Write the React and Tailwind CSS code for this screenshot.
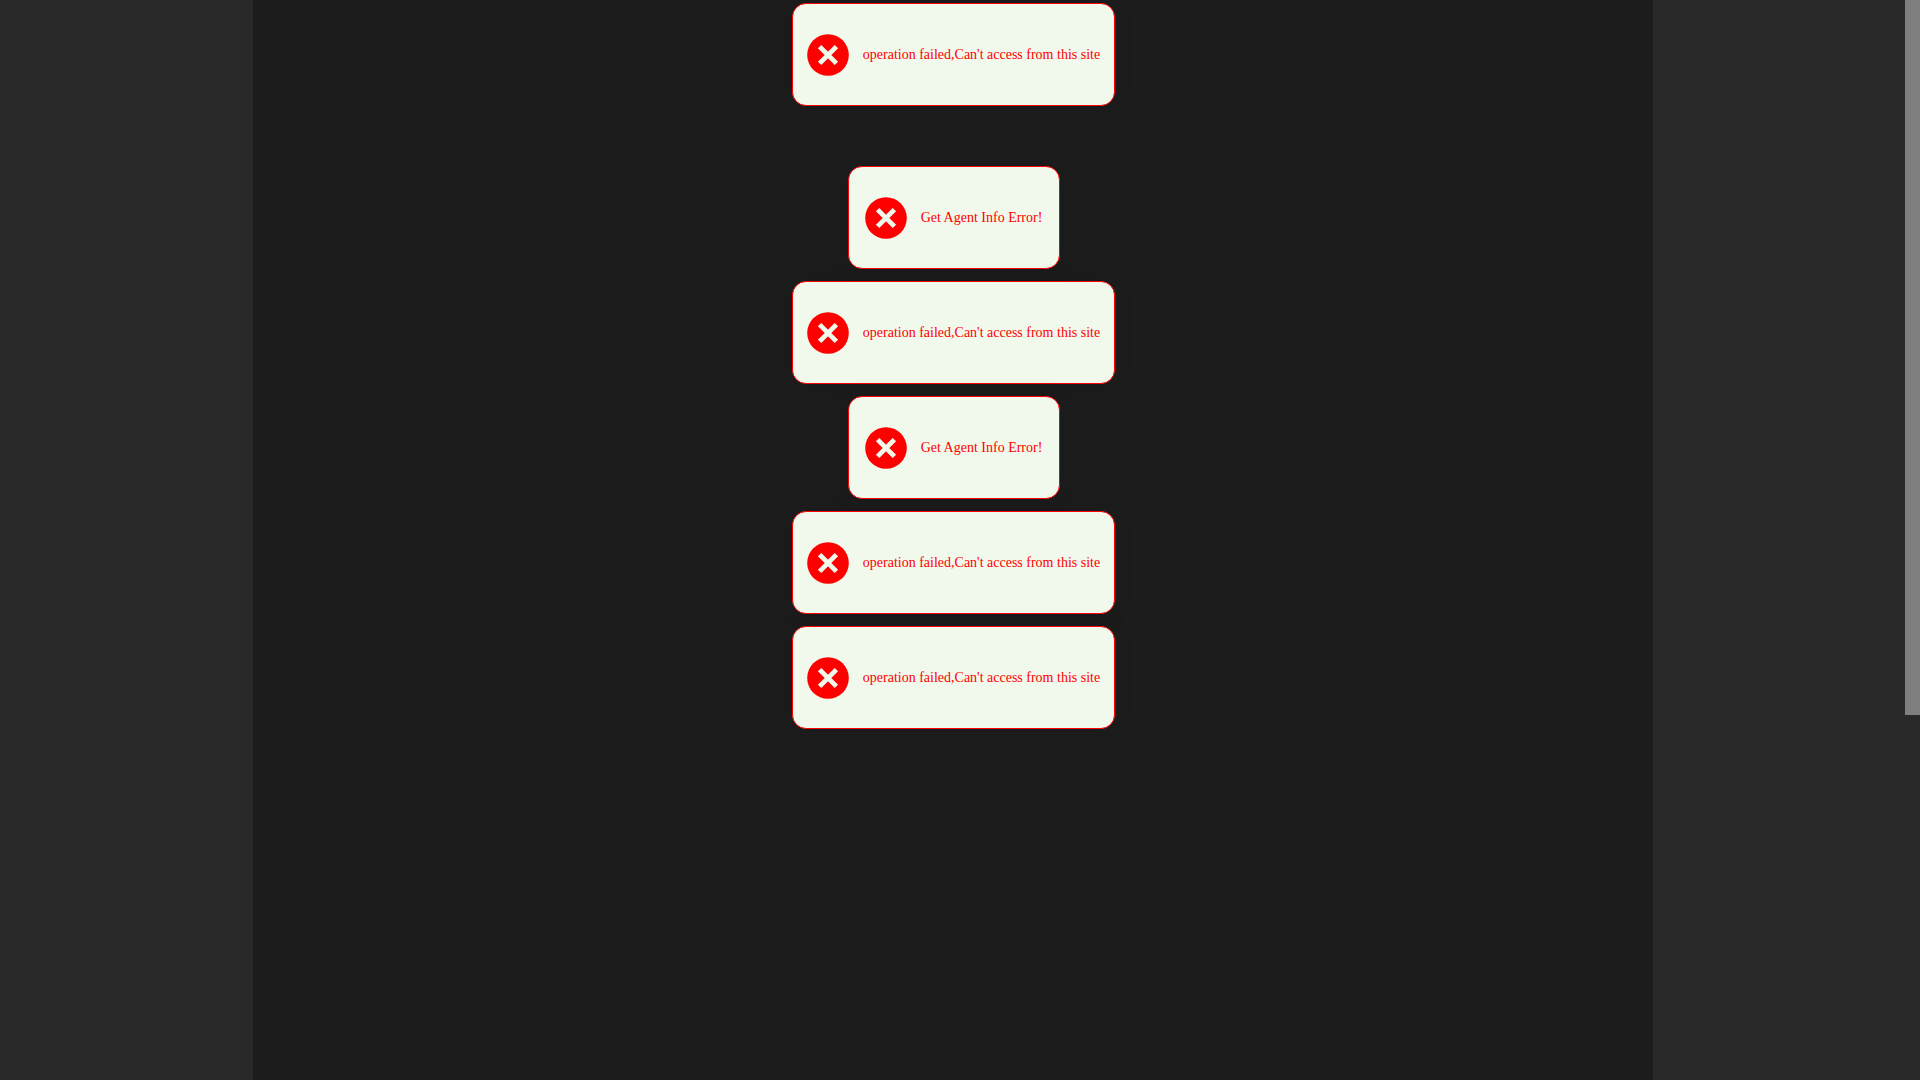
const ACCESS = "operation failed,Can't access from this site";
const AGENT = "Get Agent Info Error!";

function ErrorIcon() {
  return (
    <svg viewBox="0 0 42 42" className="size-[42px] shrink-0" aria-hidden="true">
      <circle cx="21" cy="21" r="20.8" fill="#ff0000" />
      <path d="M12.6 12.6 29.4 29.4M29.4 12.6 12.6 29.4" stroke="#f1f8ec" strokeWidth="4.8" />
    </svg>
  );
}

function Toast({ message }) {
  return (
    <div
      role="alert"
      className="flex h-[103px] min-w-[212px] items-center justify-center gap-3.5 rounded-[14px] border border-[#ff0000] bg-[#f1f8ec] px-3.5 text-[14px] leading-5 text-[#ff0000] shadow-[0_0_20px_rgba(0,0,0,0.1)]"
    >
      <ErrorIcon />
      <span className="whitespace-nowrap">{message}</span>
    </div>
  );
}

export default function App() {
  return (
    <div className="flex h-screen overflow-hidden bg-[#292929] font-['Liberation_Serif',serif]">
      <div className="flex min-w-0 flex-1 justify-center">
        <main className="flex w-full max-w-[1400px] flex-col items-center gap-[60px] bg-[#1c1c1c] pt-[3px] pl-0.5">
          <Toast message={ACCESS} />
          <div className="flex flex-col items-center gap-3">
            <Toast message={AGENT} />
            <Toast message={ACCESS} />
            <Toast message={AGENT} />
            <Toast message={ACCESS} />
            <Toast message={ACCESS} />
          </div>
        </main>
      </div>
      <div className="w-[15px] shrink-0" aria-hidden="true">
        <div className="h-[715px] bg-[#7f7f7f]" />
      </div>
    </div>
  );
}
